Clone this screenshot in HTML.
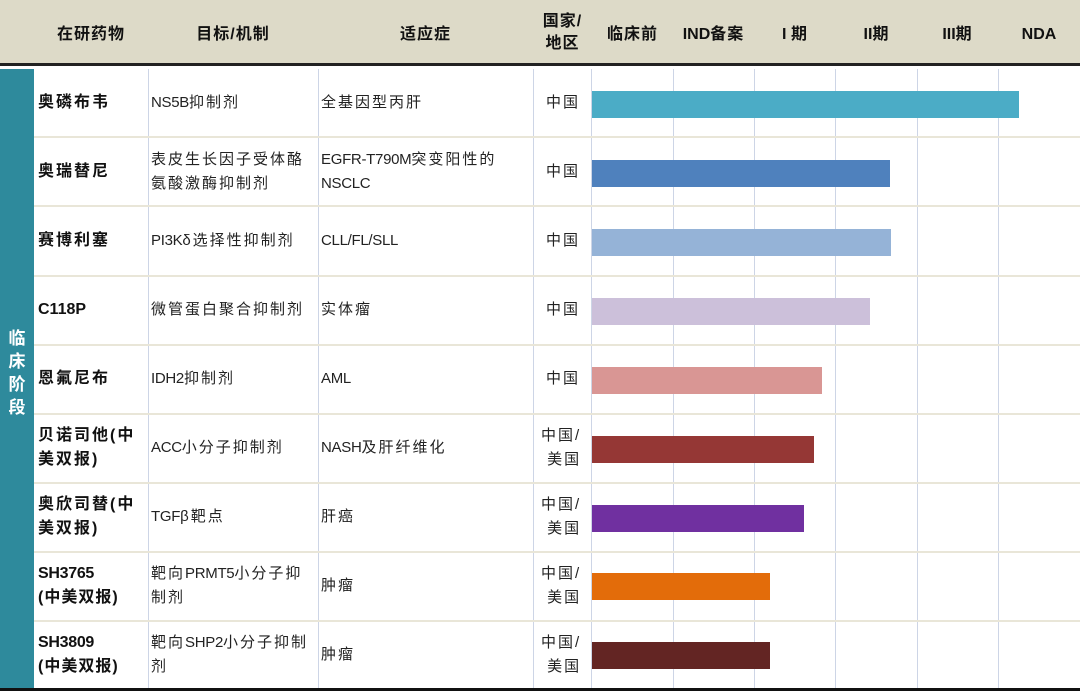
<!DOCTYPE html>
<html><head><meta charset="utf-8"><style>
*{margin:0;padding:0;box-sizing:border-box}
body{width:1080px;height:691px;background:#fff;position:relative;overflow:hidden;font-family:"Liberation Sans","Noto Sans CJK SC",sans-serif;color:#222}
.hd{position:absolute;left:0;top:0;width:1080px;height:66px;background:#dddac8;border-bottom:3px solid #222}
.h{position:absolute;font-weight:bold;font-size:16px;color:#111;text-align:center;line-height:22px;letter-spacing:1px}
.h .l{letter-spacing:0}
.side{position:absolute;left:0;top:69px;width:34px;height:619px;background:#2e8a9c;color:#fff;font-weight:bold;font-size:17px;text-align:center;line-height:23px}
.vl{position:absolute;top:69px;height:619px;width:1px;background:#cdd5e6}
.hl{position:absolute;left:34px;width:1046px;height:2px;background:#e9e6d8}
.c{position:absolute;font-size:15px;line-height:24px;letter-spacing:2px;display:flex;align-items:center;color:#222}
.c>div{display:block}
.l{letter-spacing:-0.3px}
.n{font-weight:bold;color:#111;font-size:16px}
.bar{position:absolute;left:592px;height:27px}
.bot{position:absolute;left:0;top:688px;width:1080px;height:3px;background:#111}
</style></head><body>
<div class="hd"></div>
<div class="h" style="left:34px;width:114px;top:24px">在研药物</div>
<div class="h" style="left:148px;width:170px;top:24px">目标/机制</div>
<div class="h" style="left:318px;width:215px;top:24px">适应症</div>
<div class="h" style="left:533px;width:59px;top:11px">国家/<br>地区</div>
<div class="h" style="left:592px;width:81px;top:24px">临床前</div>
<div class="h" style="left:673px;width:81px;top:24px"><span class="l">IND</span>备案</div>
<div class="h" style="left:754px;width:82px;top:24px"><span class="l">I </span>期</div>
<div class="h" style="left:836px;width:81px;top:24px"><span class="l">II</span>期</div>
<div class="h" style="left:917px;width:81px;top:24px"><span class="l">III</span>期</div>
<div class="h" style="left:998px;width:82px;top:24px"><span class="l">NDA</span></div>
<div class="side"><div style="position:absolute;top:258px;left:0;width:34px">临<br>床<br>阶<br>段</div></div>
<div class="vl" style="left:148px"></div><div class="vl" style="left:318px"></div><div class="vl" style="left:533px"></div>
<div class="vl" style="left:591px"></div><div class="vl" style="left:673px"></div><div class="vl" style="left:754px"></div>
<div class="vl" style="left:835px"></div><div class="vl" style="left:917px"></div><div class="vl" style="left:998px"></div>
<div class="hl" style="top:136px"></div><div class="hl" style="top:205px"></div><div class="hl" style="top:275px"></div>
<div class="hl" style="top:344px"></div><div class="hl" style="top:413px"></div><div class="hl" style="top:482px"></div>
<div class="hl" style="top:551px"></div><div class="hl" style="top:620px"></div>

<div class="c n" style="left:38px;top:69px;height:68px">奥磷布韦</div>
<div class="c" style="left:151px;top:69px;height:68px"><div><span class="l">NS5B</span>抑制剂</div></div>
<div class="c" style="left:321px;top:69px;height:68px">全基因型丙肝</div>
<div class="c" style="left:546px;top:69px;height:68px">中国</div>

<div class="c n" style="left:38px;top:138px;height:68px">奥瑞替尼</div>
<div class="c" style="left:151px;top:138px;height:68px"><div>表皮生长因子受体酪<br>氨酸激酶抑制剂</div></div>
<div class="c" style="left:321px;top:138px;height:68px"><div><span class="l">EGFR-T790M</span>突变阳性的<br><span class="l">NSCLC</span></div></div>
<div class="c" style="left:546px;top:138px;height:68px">中国</div>

<div class="c n" style="left:38px;top:207px;height:68px">赛博利塞</div>
<div class="c" style="left:151px;top:207px;height:68px"><div><span class="l">PI3K</span>δ选择性抑制剂</div></div>
<div class="c" style="left:321px;top:207px;height:68px"><div><span class="l">CLL/FL/SLL</span></div></div>
<div class="c" style="left:546px;top:207px;height:68px">中国</div>

<div class="c n" style="left:38px;top:276px;height:68px;letter-spacing:0">C118P</div>
<div class="c" style="left:151px;top:276px;height:68px">微管蛋白聚合抑制剂</div>
<div class="c" style="left:321px;top:276px;height:68px">实体瘤</div>
<div class="c" style="left:546px;top:276px;height:68px">中国</div>

<div class="c n" style="left:38px;top:345px;height:68px">恩氟尼布</div>
<div class="c" style="left:151px;top:345px;height:68px"><div><span class="l">IDH2</span>抑制剂</div></div>
<div class="c" style="left:321px;top:345px;height:68px"><div><span class="l">AML</span></div></div>
<div class="c" style="left:546px;top:345px;height:68px">中国</div>

<div class="c n" style="left:38px;top:414px;height:68px"><div>贝诺司他(中<br>美双报)</div></div>
<div class="c" style="left:151px;top:414px;height:68px"><div><span class="l">ACC</span>小分子抑制剂</div></div>
<div class="c" style="left:321px;top:414px;height:68px"><div><span class="l">NASH</span>及肝纤维化</div></div>
<div class="c" style="left:541px;top:414px;height:68px"><div>中国/<br>&nbsp;美国</div></div>

<div class="c n" style="left:38px;top:483px;height:68px"><div>奥欣司替(中<br>美双报)</div></div>
<div class="c" style="left:151px;top:483px;height:68px"><div><span class="l">TGF</span>β靶点</div></div>
<div class="c" style="left:321px;top:483px;height:68px">肝癌</div>
<div class="c" style="left:541px;top:483px;height:68px"><div>中国/<br>&nbsp;美国</div></div>

<div class="c n" style="left:38px;top:552px;height:68px;letter-spacing:1px"><div><span class="l">SH3765</span><br>(中美双报)</div></div>
<div class="c" style="left:151px;top:552px;height:68px"><div>靶向<span class="l">PRMT5</span>小分子抑<br>制剂</div></div>
<div class="c" style="left:321px;top:552px;height:68px">肿瘤</div>
<div class="c" style="left:541px;top:552px;height:68px"><div>中国/<br>&nbsp;美国</div></div>

<div class="c n" style="left:38px;top:621px;height:67px;letter-spacing:1px"><div><span class="l">SH3809</span><br>(中美双报)</div></div>
<div class="c" style="left:151px;top:621px;height:67px"><div>靶向<span class="l">SHP2</span>小分子抑制<br>剂</div></div>
<div class="c" style="left:321px;top:621px;height:67px">肿瘤</div>
<div class="c" style="left:541px;top:621px;height:67px"><div>中国/<br>&nbsp;美国</div></div>

<div class="bar" style="top:91px;width:427px;background:#4bacc6"></div>
<div class="bar" style="top:160px;width:298px;background:#4f81bd"></div>
<div class="bar" style="top:229px;width:299px;background:#95b3d7"></div>
<div class="bar" style="top:298px;width:278px;background:#ccc0da"></div>
<div class="bar" style="top:367px;width:230px;background:#d99694"></div>
<div class="bar" style="top:436px;width:222px;background:#953735"></div>
<div class="bar" style="top:505px;width:212px;background:#7030a0"></div>
<div class="bar" style="top:573px;width:178px;background:#e36c0a"></div>
<div class="bar" style="top:642px;width:178px;background:#632523"></div>
<div class="bot"></div>
</body></html>
